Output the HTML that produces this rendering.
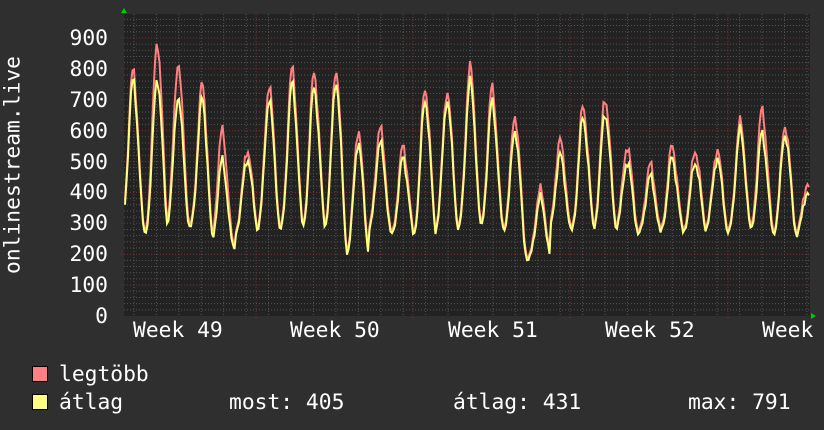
<!DOCTYPE html>
<html><head><meta charset="utf-8"><style>
html,body{margin:0;padding:0;background:#2f2f2f;}
body{width:824px;height:430px;overflow:hidden;position:relative;font-family:"DejaVu Sans Mono","Liberation Mono",monospace;color:#fff;}
.t{position:absolute;font-size:21.3px;white-space:pre;line-height:1;}
</style></head><body>
<svg id="g" width="824" height="430" style="position:absolute;left:0;top:0"></svg>
<div class="t" style="left:0;top:165px;width:26px;"><div style="position:absolute;left:2px;top:0;transform:translate(-50%,-50%) rotate(-90deg);transform-origin:center;margin-left:11px;">onlinestream.live</div></div>
<div id="yl"></div>
<div class="t" style="left:133px;top:320px">Week 49</div>
<div class="t" style="left:290px;top:320px">Week 50</div>
<div class="t" style="left:448px;top:320px">Week 51</div>
<div class="t" style="left:605px;top:320px">Week 52</div>
<div class="t" style="left:762px;top:320px">Week</div>
<div style="position:absolute;left:32px;top:366px;width:14px;height:14px;background:#ff8080;border:1px solid #000"></div>
<div style="position:absolute;left:32px;top:394px;width:14px;height:14px;background:#ffff80;border:1px solid #000"></div>
<div class="t" style="left:59px;top:364px">legtöbb</div>
<div class="t" style="left:59px;top:392px">átlag</div>
<div class="t" style="left:229px;top:392px">most: 405</div>
<div class="t" style="left:453px;top:392px">átlag: 431</div>
<div class="t" style="left:688px;top:392px">max: 791</div>
<script>
var s='';var X0=124,X1=810,Y0=14,Y1=316,k=0.309;
s+='<rect x="'+X0+'" y="'+Y0+'" width="'+(X1-X0)+'" height="'+(Y1-Y0)+'" fill="#222"/>';
for(var v=20;v<=980;v+=20){var y=Y1-v*k;if(y<Y0)break;if(v%100)s+='<line x1="'+X0+'" x2="'+X1+'" y1="'+y+'" y2="'+y+'" stroke="#555" stroke-dasharray="1,2"/>';}
for(var x=X0+10;x<X1;x+=22.43){s+='<line x1="'+x+'" x2="'+x+'" y1="'+Y0+'" y2="'+Y1+'" stroke="#555" stroke-dasharray="1,2"/>';}
for(var v=100;v<=900;v+=100){var y=Y1-v*k;s+='<line x1="'+(X0-3)+'" x2="'+X1+'" y1="'+y+'" y2="'+y+'" stroke="#803030" stroke-dasharray="1,2"/>';}
[256,413,570,728].forEach(function(x){s+='<line x1="'+x+'" x2="'+x+'" y1="'+Y0+'" y2="'+(Y1+3)+'" stroke="#803030" stroke-dasharray="1,2"/>';});
var P=[[133,785,760,270],[157,880,770,250],[178,810,710,270],[202,740,700,270],[222,590,500,210],[247,530,510,260],[269,735,700,260],[292,790,750,255],[314,780,740,260],[336,790,760,260],[358,590,560,175],[380,600,560,260],[403,540,510,250],[425,730,700,240],[447,720,700,260],[470,800,760,260],[492,730,690,260],[515,640,600,260],[540,400,380,175],[560,560,520,260],[583,670,640,260],[605,700,660,265],[627,540,500,270],[650,480,450,255],[672,540,510,260],[695,530,500,265],[717,530,510,270],[740,620,600,255],[762,660,590,260],[785,610,590,250],[807,420,400,250]];
function val(x,i){var best=0,bd=1e9;for(var j=0;j<P.length;j++){var dd=Math.abs(x-P[j][0]);if(dd<bd){bd=dd;best=j;}}
var p=P[best];var tr=p[3];if(x>p[0]&&best+1<P.length)tr=Math.min(tr,P[best+1][3]);var d=(x-p[0])/11.2;var f=Math.exp(-d*d*3.2);
var n=Math.sin(x*1.7)*12+Math.sin(x*0.63)*16;var sh=Math.exp(-Math.pow((x-p[0]-6)/3,2))*0.12;
return tr+(p[i]-tr)*Math.min(1,f+sh)+n*(0.3+f*0.5)+(i==1?8:0);}
function line(i,c){var pts=[];for(var x=X0+1;x<=X1;x+=1.5){var v=val(x,i);pts.push(x.toFixed(1)+','+(Y1-v*k).toFixed(1));}return '<polyline points="'+pts.join(' ')+'" fill="none" stroke="'+c+'" stroke-width="2"/>';}
s+=line(1,'#ff8080');s+=line(2,'#ffff80');
s+='<polygon points="121,13 127,13 124,8" fill="#0c0"/><polygon points="811,313 811,319 816,316" fill="#0c0"/>';
document.getElementById('g').innerHTML=s;
var h='';for(var v=0;v<=900;v+=100){var y=316-v*0.309;h+='<div class="t" style="right:'+(824-108)+'px;top:'+(y-10)+'px">'+v+'</div>';}
document.getElementById('yl').innerHTML=h;
</script>
</body></html>
